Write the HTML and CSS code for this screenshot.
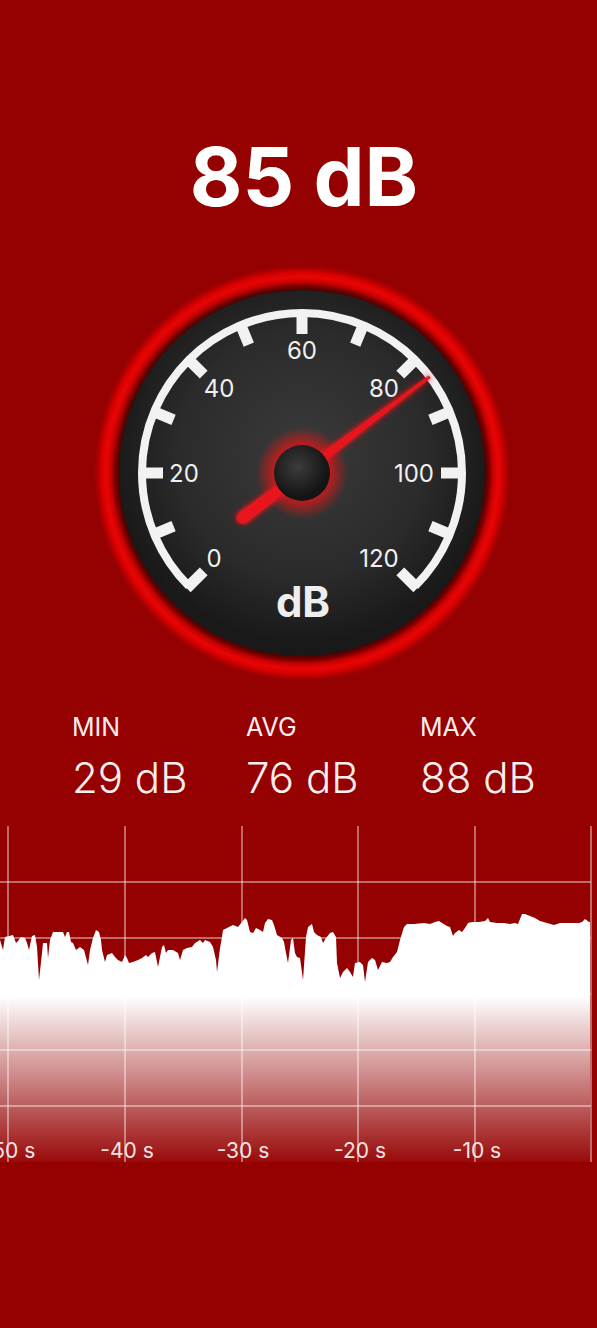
FILE: index.html
```html
<!DOCTYPE html>
<html lang="en">
<head>
    <meta charset="UTF-8">
    <meta name="viewport" content="width=device-width, initial-scale=1.0">
    <title>Sound Meter</title>
    <link rel="stylesheet" href="styles.css">
</head>
<body>
    <main class="meter">
        <h1 class="reading">85 dB</h1>

        <!-- gauge -->
        <div class="gauge-wrap">
            <svg class="gauge" viewBox="-210 -210 420 420" width="420" height="420">
                <defs>
                    <radialGradient id="ring" cx="0" cy="0" r="208" gradientUnits="userSpaceOnUse">
                        <stop offset="0.87" stop-color="#3a0000"/>
                        <stop offset="0.9" stop-color="#7a0000"/>
                        <stop offset="0.918" stop-color="#c80000"/>
                        <stop offset="0.942" stop-color="#e60606"/>
                        <stop offset="0.962" stop-color="#dc0000"/>
                        <stop offset="0.98" stop-color="#b40000"/>
                        <stop offset="1" stop-color="#950000"/>
                    </radialGradient>
                    <radialGradient id="face" cx="0" cy="-20" r="190" gradientUnits="userSpaceOnUse">
                        <stop offset="0" stop-color="#3a3a3a"/>
                        <stop offset="0.65" stop-color="#2b2b2b"/>
                        <stop offset="1" stop-color="#191919"/>
                    </radialGradient>
                    <radialGradient id="halo" cx="0" cy="0" r="46" gradientUnits="userSpaceOnUse">
                        <stop offset="0.55" stop-color="#ff1010" stop-opacity="0.75"/>
                        <stop offset="1" stop-color="#ff1010" stop-opacity="0"/>
                    </radialGradient>
                    <radialGradient id="hub" cx="-4" cy="-6" r="30" gradientUnits="userSpaceOnUse">
                        <stop offset="0" stop-color="#3c3c3c"/>
                        <stop offset="1" stop-color="#141414"/>
                    </radialGradient>
                    <filter id="glow" x="-50%" y="-50%" width="200%" height="200%">
                        <feGaussianBlur stdDeviation="3" result="blur"/>
                        <feMerge>
                            <feMergeNode in="blur"/>
                            <feMergeNode in="SourceGraphic"/>
                        </feMerge>
                    </filter>
                </defs>

                <circle r="208" fill="url(#ring)"/>
                <circle r="183" fill="url(#face)"/>

                <path class="scale" d="M -113.14 113.14 A 160 160 0 1 1 113.14 113.14"/>
                <g class="ticks">
                    <rect x="-5.5" y="-163" width="11" height="24" transform="rotate(-135)"/>
                    <rect x="-5.5" y="-163" width="11" height="24" transform="rotate(-112.5)"/>
                    <rect x="-5.5" y="-163" width="11" height="24" transform="rotate(-90)"/>
                    <rect x="-5.5" y="-163" width="11" height="24" transform="rotate(-67.5)"/>
                    <rect x="-5.5" y="-163" width="11" height="24" transform="rotate(-45)"/>
                    <rect x="-5.5" y="-163" width="11" height="24" transform="rotate(-22.5)"/>
                    <rect x="-5.5" y="-163" width="11" height="24"/>
                    <rect x="-5.5" y="-163" width="11" height="24" transform="rotate(22.5)"/>
                    <rect x="-5.5" y="-163" width="11" height="24" transform="rotate(45)"/>
                    <rect x="-5.5" y="-163" width="11" height="24" transform="rotate(67.5)"/>
                    <rect x="-5.5" y="-163" width="11" height="24" transform="rotate(90)"/>
                    <rect x="-5.5" y="-163" width="11" height="24" transform="rotate(112.5)"/>
                    <rect x="-5.5" y="-163" width="11" height="24" transform="rotate(135)"/>
                </g>

                <g class="scale-labels">
                    <text x="-88" y="94">0</text>
                    <text x="-118" y="9">20</text>
                    <text x="-83" y="-76">40</text>
                    <text x="0" y="-114">60</text>
                    <text x="82" y="-76">80</text>
                    <text x="112" y="9">100</text>
                    <text x="77" y="94">120</text>
                </g>
                <text class="unit" x="1" y="144">dB</text>

                <circle r="46" fill="url(#halo)"/>
                <g transform="rotate(53)" filter="url(#glow)">
                    <path class="needle" d="M -1.6 -160 L 1.6 -160 L 6.5 74 A 6.5 6.5 0 0 1 -6.5 74 Z"/>
                </g>
                <circle r="28" fill="url(#hub)"/>
            </svg>
        </div>

        <section class="stats">
            <div class="stat">
                <div class="stat-label">MIN</div>
                <div class="stat-value">29 dB</div>
            </div>
            <div class="stat">
                <div class="stat-label">AVG</div>
                <div class="stat-value">76 dB</div>
            </div>
            <div class="stat">
                <div class="stat-label">MAX</div>
                <div class="stat-value">88 dB</div>
            </div>
        </section>
    </main>

    <!-- last 60 seconds -->
    <section class="history">
        <svg class="history-chart" viewBox="0 826 597 336" width="597" height="336">
            <defs>
                <linearGradient id="fade" x1="0" y1="996" x2="0" y2="1162" gradientUnits="userSpaceOnUse">
                    <stop offset="0" stop-color="#fff" stop-opacity="1"/>
                    <stop offset="1" stop-color="#fff" stop-opacity="0.04"/>
                </linearGradient>
            </defs>
            <path class="level" fill="url(#fade)" d="M0 940 L3 950 L5 937 L13 935 L16 943 L18 941 L21 937 L25 938 L27 943 L29 950 L32 936 L35 935 L37 947 L39 980 L42 953 L43 943 L47 943 L48 958 L50 940 L53 932 L63 932 L65 937 L67 932 L69 932 L71 942 L73 943 L76 950 L80 947 L84 950 L88 965 L90 950 L93 938 L96 930 L99 932 L101 940 L102 950 L105 962 L107 955 L112 953 L115 957 L118 960 L122 962 L125 955 L127 958 L129 963 L133 962 L138 960 L142 958 L146 955 L148 957 L152 953 L155 952 L158 967 L162 947 L164 945 L166 953 L168 950 L173 950 L178 953 L180 960 L183 950 L187 948 L192 947 L195 943 L200 940 L203 943 L205 940 L210 942 L213 947 L216 960 L217 972 L220 948 L222 937 L223 930 L227 928 L233 925 L238 927 L242 922 L245 918 L247 920 L250 932 L253 933 L256 928 L260 930 L263 932 L265 923 L268 919 L272 920 L274 925 L277 935 L282 938 L284 942 L286 953 L288 963 L291 940 L293 938 L295 953 L297 957 L300 958 L303 980 L306 937 L308 927 L312 924 L314 932 L317 935 L321 937 L323 943 L326 938 L330 933 L333 932 L336 937 L337 963 L340 978 L343 972 L347 968 L350 972 L353 977 L355 963 L360 962 L363 965 L365 982 L368 962 L372 958 L375 960 L378 970 L382 962 L387 963 L390 962 L393 957 L397 952 L400 940 L404 927 L407 924 L414 924 L424 923 L430 924 L435 922 L439 921 L442 923 L447 926 L450 927 L453 936 L455 933 L459 930 L462 932 L465 928 L468 923 L472 922 L479 922 L485 921 L488 918 L490 922 L497 923 L504 923 L510 924 L515 923 L518 924 L522 914 L525 914 L530 916 L535 918 L540 921 L547 923 L554 925 L560 923 L570 923 L579 923 L582 922 L585 919 L589 922 L590 922 L590 1162 L0 1162 Z"/>
            <g class="grid">
                <line x1="8" y1="826" x2="8" y2="1162"/>
                <line x1="125" y1="826" x2="125" y2="1162"/>
                <line x1="242" y1="826" x2="242" y2="1162"/>
                <line x1="358" y1="826" x2="358" y2="1162"/>
                <line x1="475" y1="826" x2="475" y2="1162"/>
                <line x1="591" y1="826" x2="591" y2="1162"/>
                <line x1="0" y1="882" x2="591" y2="882"/>
                <line x1="0" y1="938" x2="591" y2="938"/>
                <line x1="0" y1="994" x2="591" y2="994"/>
                <line x1="0" y1="1050" x2="591" y2="1050"/>
                <line x1="0" y1="1106" x2="591" y2="1106"/>
            </g>
            <g class="axis">
                <text x="9" y="1158">-50 s</text>
                <text x="127" y="1158">-40 s</text>
                <text x="243" y="1158">-30 s</text>
                <text x="360" y="1158">-20 s</text>
                <text x="477" y="1158">-10 s</text>
            </g>
        </svg>
    </section>
</body>
</html>
```

FILE: styles.css
```css
body {
    margin: 0;
    background: #950000;
    color: #fbeeee;
    font-family: Inter, 'Liberation Sans', sans-serif;
}

.meter {
    padding-left: 6px;
}

.reading {
    margin: 137px 0 0;
    padding-left: 5px;
    font-size: 81px;
    font-weight: 700;
    line-height: 1;
    text-align: center;
    color: #fff;
}

.gauge-wrap {
    display: flex;
    justify-content: center;
    margin-top: 45px;
}

.gauge {
    display: block;
}

.gauge .scale {
    fill: none;
    stroke: #f2f2f2;
    stroke-width: 8;
}

.gauge .ticks rect {
    fill: #f2f2f2;
}

.gauge .scale-labels text {
    font-family: Inter, 'Liberation Sans', sans-serif;
    font-size: 24px;
    fill: #f0f0f0;
    text-anchor: middle;
}

.gauge .unit {
    font-family: Inter, 'Liberation Sans', sans-serif;
    font-size: 42px;
    font-weight: 700;
    fill: #eeeeee;
    text-anchor: middle;
}

.gauge .needle {
    fill: #e8141c;
}

/* min / avg / max */
.stats {
    display: grid;
    grid-template-columns: repeat(3, 174px);
    padding-left: 66px;
    margin-top: 32px;
}

.stat-label {
    font-size: 25px;
    line-height: 1;
}

.stat-value {
    margin-top: 17px;
    font-size: 42px;
    font-weight: 300;
    line-height: 1;
}

/* history chart */
.history {
    margin-top: 27px;
}

.history-chart {
    display: block;
}

.history-chart .grid line {
    stroke: rgba(255, 255, 255, 0.55);
    stroke-width: 1.5;
}

.history-chart .axis text {
    font-family: Inter, 'Liberation Sans', sans-serif;
    font-size: 21px;
    fill: #f5e4e4;
    text-anchor: middle;
}
```
